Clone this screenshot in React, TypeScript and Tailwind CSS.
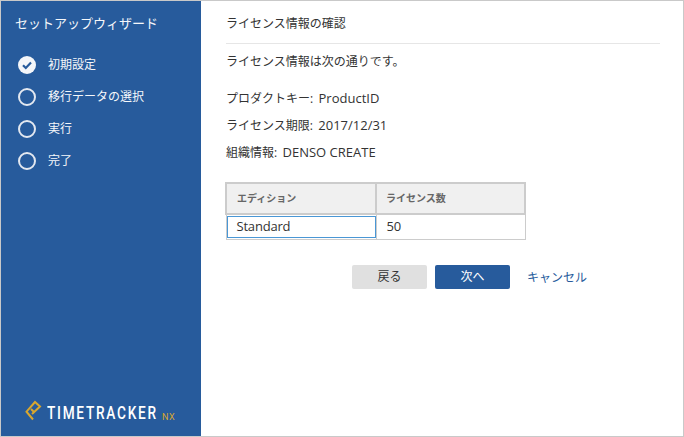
const cjk = "font-['Open_Sans','Noto_Sans_CJK_JP',sans-serif]";
const lat = "text-[13px] ml-[2px]";

function Step({ label, done }: { label: string; done?: boolean }) {
  return (
    <li className="flex h-8 items-center">
      {done ? (
        <svg width="18" height="18" viewBox="0 0 18 18" className="shrink-0">
          <circle cx="9" cy="9" r="9" fill="#f4f6f9" />
          <path d="M5 9.2l2.8 2.8L13 6.6" fill="none" stroke="#275b9c" strokeWidth="2.2" />
        </svg>
      ) : (
        <span className="h-[18px] w-[18px] shrink-0 rounded-full border-2 border-[#e3e8f0]" />
      )}
      <span className="ml-[12px] text-[12px] text-[#f5f7fa]">{label}</span>
    </li>
  );
}

export default function App() {
  return (
    <div className={`flex h-[437px] w-[684px] border border-[#c9c9c9] bg-white text-[#333] ${cjk}`}>
      <aside className="flex w-[200px] shrink-0 flex-col bg-[#275b9c] pl-[14px]">
        <h1 className="mt-[12px] h-[20px] text-[13px] font-normal leading-[20px] text-[#f5f7fa]">セットアップウィザード</h1>
        <ul className="mt-[16px] pl-[3px]">
          <Step label="初期設定" done />
          <Step label="移行データの選択" />
          <Step label="実行" />
          <Step label="完了" />
        </ul>
        <div className="mt-auto mb-[13px] ml-[10px] flex items-end">
          <svg width="20" height="24" viewBox="0 0 20 24" className="shrink-0">
            <path d="M8 20.5L1.5 12.7 10 3l5 4.5-8 7.5M6 10l3.5 3.5" fill="none" stroke="#d9a72e" strokeWidth="2" />
          </svg>
          <span className="ml-[2px] w-[112px] whitespace-nowrap text-[19px] font-medium leading-[20px] tracking-[2.4px] text-white font-['Roboto',sans-serif] [transform:scaleX(0.72)] origin-left">TIMETRACKER</span>
          <span className="ml-[3px] text-[9px] font-normal leading-[12px] tracking-[0.5px] text-[#d9a72e] font-['Roboto',sans-serif]">NX</span>
        </div>
      </aside>
      <main className="min-w-0 flex-1 pl-[25px] pr-[23px] text-[12px]">
        <h2 className="flex h-[43px] items-center border-b border-[#e6e6e6] pt-[4px] text-[12px] font-normal">ライセンス情報の確認</h2>
        <p className="mt-[8px] leading-[20px]">ライセンス情報は次の通りです。</p>
        <div className="mt-[16px] space-y-[7px] leading-[20px]">
          <p className="h-[20px]">プロダクトキー:<span className={lat}> ProductID</span></p>
          <p className="h-[20px]">ライセンス期限:<span className={lat}> 2017/12/31</span></p>
          <p className="h-[20px]">組織情報:<span className={lat}> DENSO CREATE</span></p>
        </div>
        <table className="mt-[20px] ml-[-1px] w-[301px] table-fixed border-collapse">
          <thead>
            <tr className="h-[31px] bg-[#f0f0f0] text-[10px] font-bold text-[#666]">
              <th className="w-[150px] border-2 border-[#cccccc] pl-[10px] text-left">エディション</th>
              <th className="border-2 border-[#cccccc] pl-[9px] text-left">ライセンス数</th>
            </tr>
          </thead>
          <tbody className="text-[13px] tracking-[-0.2px]">
            <tr className="h-[25px]">
              <td className="border border-[#cccccc] p-0">
                <div className="mt-[1px] h-[22px] border border-[#4a97d5] pl-[9px] leading-[19px]">Standard</div>
              </td>
              <td className="border border-[#cccccc] pl-[10px]">50</td>
            </tr>
          </tbody>
        </table>
        <div className="mt-[25px] ml-[126px] flex items-center">
          <button className="h-[24px] w-[75px] rounded-[2px] bg-[#e0e0e0]">戻る</button>
          <button className="ml-[8px] h-[24px] w-[75px] rounded-[2px] bg-[#275b9c] text-white">次へ</button>
          <a className="ml-[17px] pt-[2px] text-[#275b9c]">キャンセル</a>
        </div>
      </main>
    </div>
  );
}
